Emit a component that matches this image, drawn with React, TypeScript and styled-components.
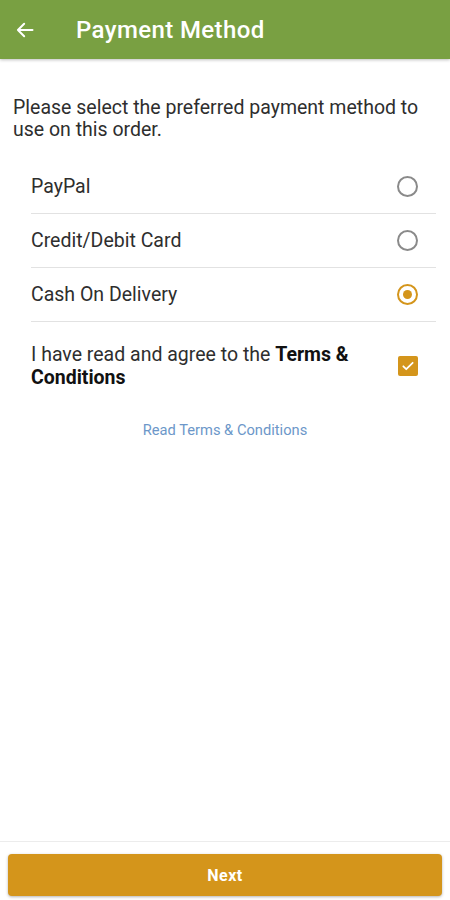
import React, { useState } from 'react';
import styled, { createGlobalStyle } from 'styled-components';

const Color = {
  Header: '#79a042',
  Accent: '#d4951b',
  Text: '#2e2e2e',
  Divider: '#e2e2e2',
  Radio: '#8a8a8a',
  Link: '#6c97c9',
};

const GlobalStyle = createGlobalStyle`
  html, body {
    margin: 0;
    padding: 0;
    background: #ffffff;
    font-family: Roboto, "Liberation Sans", sans-serif;
  }
`;

const methods = ['PayPal', 'Credit/Debit Card', 'Cash On Delivery'];

export default () => {
  const [selected, setSelected] = useState(2);
  const [agreed, setAgreed] = useState(true);

  return (
    <Page>
      <GlobalStyle />
      <Header>
        <BackButton>
          <svg width="20" height="20" viewBox="0 0 24 24" fill="none" stroke="#fff" strokeWidth="2.4" strokeLinecap="round" strokeLinejoin="round">
            <path d="M21 12H3.5M11 4.5L3.5 12l7.5 7.5" />
          </svg>
        </BackButton>
        <Title>Payment Method</Title>
      </Header>

      <Content>
        <Intro>Please select the preferred payment method to use on this order.</Intro>
        <List>
          {methods.map((m, i) => (
            <Row key={m} onClick={() => setSelected(i)}>
              <Label>{m}</Label>
              <Radio isOn={selected === i} />
            </Row>
          ))}
          <TermsRow onClick={() => setAgreed(!agreed)}>
            <Label>
              I have read and agree to the <b>Terms &amp; Conditions</b>
            </Label>
            <Checkbox isOn={agreed}>
              {agreed && (
                <svg width="14" height="14" viewBox="0 0 24 24" fill="none" stroke="#fff" strokeWidth="3" strokeLinecap="round" strokeLinejoin="round">
                  <path d="M4 12.5l5 5L20 6.5" />
                </svg>
              )}
            </Checkbox>
          </TermsRow>
        </List>
        <Link>Read Terms &amp; Conditions</Link>
      </Content>

      <Footer>
        <NextButton>Next</NextButton>
      </Footer>
    </Page>
  );
};

const Page = styled.div`
  width: 450px;
  height: 900px;
  display: flex;
  flex-direction: column;
`;

const Header = styled.div`
  height: 59px;
  background-color: ${Color.Header};
  display: flex;
  align-items: center;
  box-shadow: 0 1px 3px rgba(0, 0, 0, 0.25);
  flex-shrink: 0;
`;

const BackButton = styled.div`
  width: 20px;
  height: 20px;
  margin-left: 15px;
  display: flex;
`;

const Title = styled.div`
  margin-left: 41px;
  color: #fff;
  font-size: 24px;
  font-weight: 500;
  letter-spacing: 0.4px;
`;

const Content = styled.div`
  flex: 1;
  padding: 38px 14px 0 13px;
`;

const Intro = styled.div`
  font-size: 19.5px;
  line-height: 22px;
  color: ${Color.Text};
`;

const List = styled.div`
  margin: 19px 0 0 18px;
`;

const Row = styled.div`
  height: 53px;
  border-bottom: 1px solid ${Color.Divider};
  display: flex;
  align-items: center;
  justify-content: space-between;
  padding-right: 18px;
`;

const TermsRow = styled(Row)`
  height: auto;
  border-bottom: none;
  padding-top: 21px;
`;

const Label = styled.div`
  font-size: 19.5px;
  line-height: 23px;
  color: ${Color.Text};
  max-width: 340px;

  b {
    font-weight: 700;
    color: #111;
  }
`;

const Radio = styled.div<{isOn: boolean}>`
  width: 17px;
  height: 17px;
  border-radius: 50%;
  border: 2px solid ${props => props.isOn ? Color.Accent : Color.Radio};
  display: flex;
  align-items: center;
  justify-content: center;

  &::after {
    content: '';
    width: 9px;
    height: 9px;
    border-radius: 50%;
    background-color: ${Color.Accent};
    display: ${props => props.isOn ? 'block' : 'none'};
  }
`;

const Checkbox = styled.div<{isOn: boolean}>`
  width: 20px;
  height: 20px;
  border-radius: 2px;
  background-color: ${props => props.isOn ? Color.Accent : 'transparent'};
  border: ${props => props.isOn ? 'none' : `2px solid ${Color.Radio}`};
  display: flex;
  align-items: center;
  justify-content: center;
`;

const Link = styled.div`
  margin-top: 32px;
  text-align: center;
  font-size: 14.7px;
  color: ${Color.Link};
  padding-left: 1px;
`;

const Footer = styled.div`
  border-top: 1px solid #ececec;
  padding: 12px 8px 4px 8px;
  flex-shrink: 0;
`;

const NextButton = styled.div`
  height: 42px;
  border-radius: 4px;
  background-color: ${Color.Accent};
  color: #fff;
  font-size: 16px;
  font-weight: 700;
  letter-spacing: 0.5px;
  display: flex;
  align-items: center;
  justify-content: center;
  box-shadow: 0 1px 3px rgba(0, 0, 0, 0.3);
`;
